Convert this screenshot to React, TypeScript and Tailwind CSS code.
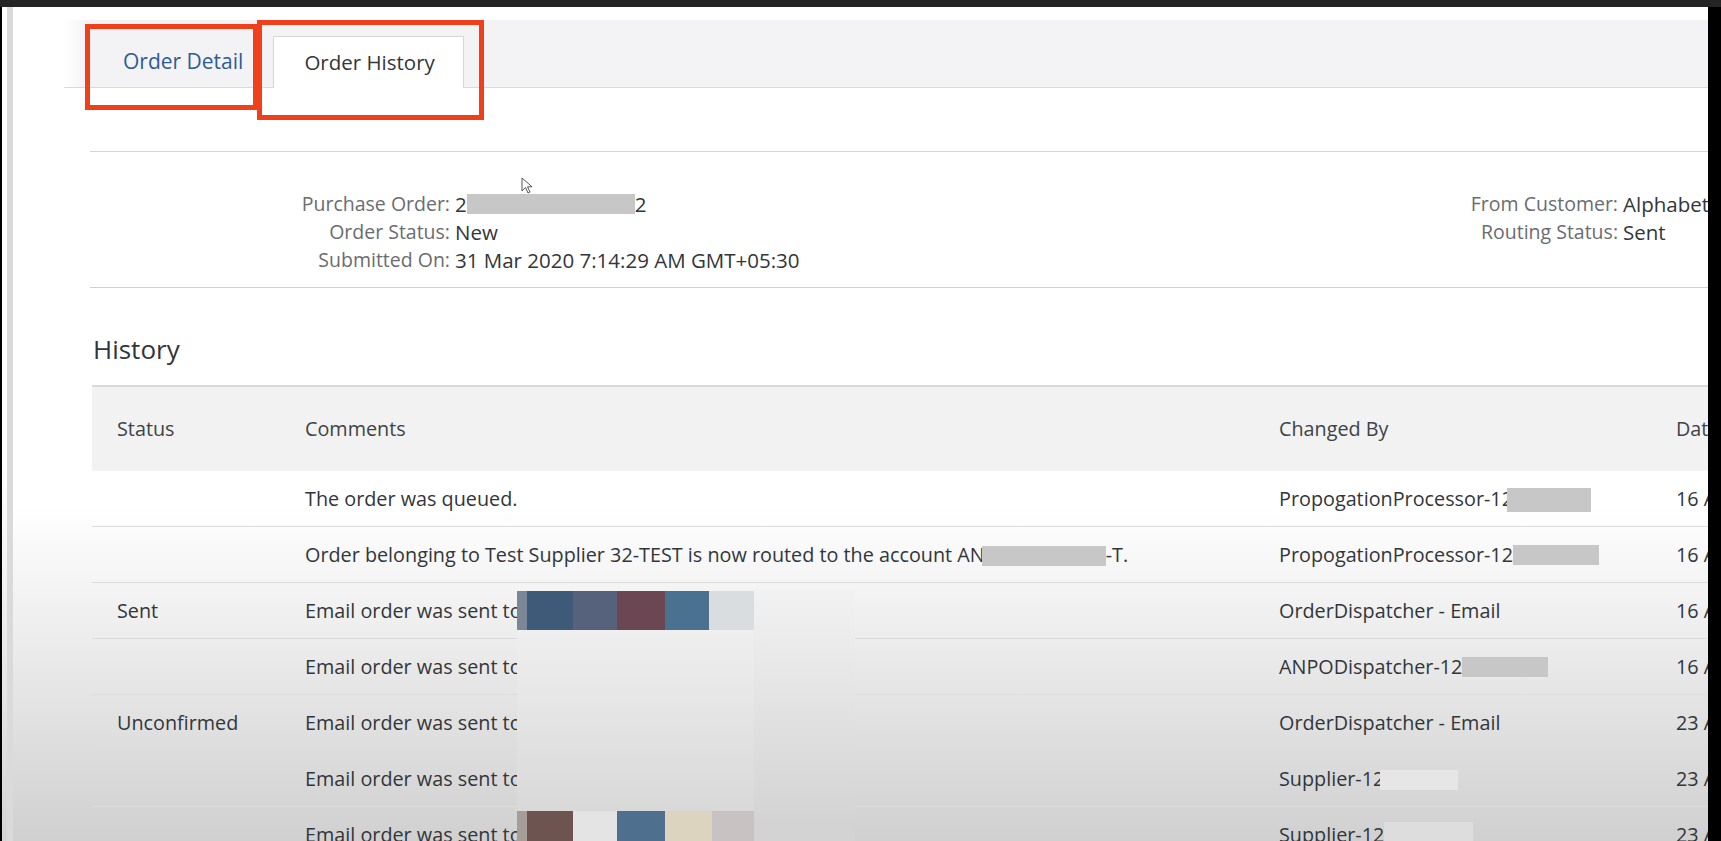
import React from "react";

interface HistoryRow {
  status: string;
  comment: React.ReactNode;
  changedBy: React.ReactNode;
  date: string;
}

// grey redaction block used inline with text
function Redact({ w, h = 22, tone = "bg-[#c7c7c7]" }: { w: number; h?: number; tone?: string }) {
  return (
    <span
      className={`inline-block align-middle ${tone}`}
      style={{ width: w, height: h }}
    />
  );
}

const rows: HistoryRow[] = [
  {
    status: "",
    comment: "The order was queued.",
    changedBy: (
      <>
        PropogationProcessor-12
        <span className="-ml-[6px]">
          <Redact w={84} h={24} />
        </span>
      </>
    ),
    date: "16 Apr 2020 10:41:12 AM",
  },
  {
    status: "",
    comment: (
      <>
        Order belonging to Test Supplier 32-TEST is now routed to the account AN
        <span className="-ml-[3px]">
          <Redact w={124} h={20} />
        </span>
        -T.
      </>
    ),
    changedBy: (
      <>
        PropogationProcessor-12
        <Redact w={86} h={20} />
      </>
    ),
    date: "16 Apr 2020 10:41:12 AM",
  },
  {
    status: "Sent",
    comment: "Email order was sent to",
    changedBy: "OrderDispatcher - Email",
    date: "16 Apr 2020 10:42:03 AM",
  },
  {
    status: "",
    comment: "Email order was sent to",
    changedBy: (
      <>
        ANPODispatcher-12
        <Redact w={86} h={20} />
      </>
    ),
    date: "16 Apr 2020 10:42:03 AM",
  },
  {
    status: "Unconfirmed",
    comment: "Email order was sent to",
    changedBy: "OrderDispatcher - Email",
    date: "23 Apr 2020 09:15:40 AM",
  },
  {
    status: "",
    comment: "Email order was sent to",
    changedBy: (
      <>
        Supplier-12
        <span className="-ml-[4px]">
          <Redact w={78} h={20} tone="bg-[#e6e6e6]" />
        </span>
      </>
    ),
    date: "23 Apr 2020 09:15:40 AM",
  },
  {
    status: "",
    comment: "Email order was sent to",
    changedBy: (
      <>
        Supplier-12
        <Redact w={89} h={26} tone="bg-[#dddddd]" />
      </>
    ),
    date: "23 Apr 2020 09:15:40 AM",
  },
];

export default function App() {
  return (
    <div className="w-[1721px] h-[841px] overflow-hidden flex flex-col bg-black font-['Open_Sans',sans-serif]">
      {/* top dark strip */}
      <div className="h-[7px] bg-[#242424] shrink-0" />

      <div className="flex flex-1 min-h-0">
        {/* left edge */}
        <div className="w-[2px] bg-black" />
        <div className="w-[5px] bg-[linear-gradient(to_bottom,#ffffff_55%,#d4d4d4)]" />
        <div className="w-[6px] bg-[#dadada]" />

        {/* page */}
        <div className="relative flex-1 min-w-0 overflow-hidden bg-[linear-gradient(to_bottom,#ffffff_0%,#ffffff_60%,#d0d0d0_100%)]">
          {/* Tabs */}
          <div className="mt-[13px] ml-[51px] h-[68px] flex items-end border-b border-[#d9d9db] bg-[linear-gradient(to_right,#ffffff,#f3f3f5_24px)]">
            <div className="h-[51px] flex items-center pl-[59px] pr-[30px] text-[21px] text-[#2f5b98]">
              Order Detail
            </div>
            <div className="h-[52px] -mb-px flex items-center pl-[30px] pr-[28px] bg-white border border-b-0 border-[#d6d6d8] text-[20.5px] text-[#32363a]">
              Order History
            </div>
          </div>

          {/* highlight boxes */}
          <div className="absolute left-[72px] top-[17px] w-[173px] h-[86px] border-[5px] border-[#ef3f1b]" />
          <div className="absolute left-[244px] top-[13px] w-[227px] h-[100px] border-[5px] border-[#ef3f1b]" />

          {/* mouse pointer */}
          <svg
            className="absolute left-[508px] top-[170px]"
            width="14"
            height="18"
            viewBox="0 0 14 18"
          >
            <path
              d="M1 1 L1 14 L4.5 10.5 L7 16 L9 15 L6.5 9.8 L11 9.8 Z"
              fill="#ffffff"
              stroke="#555"
              strokeWidth="1"
              strokeLinejoin="round"
            />
          </svg>

          <div className="ml-[77px]">
            {/* info */}
            <div className="mt-[63px] border-t border-[#d4d4d4]" />
            <div className="flex pt-[38px] pb-[13px] leading-[28px] whitespace-nowrap">
              <div className="w-[1360px] shrink-0 grid grid-cols-[360px_1fr] gap-x-[5px]">
                <span className="text-right text-[19.5px] text-[#6a6d70]">Purchase Order:</span>
                <span className="text-[20.5px] text-[#32363a] flex items-center">
                  2
                  <Redact w={168} h={20} />
                  2
                </span>
                <span className="text-right text-[19.5px] text-[#6a6d70]">Order Status:</span>
                <span className="text-[20.5px] text-[#32363a]">New</span>
                <span className="text-right text-[19.5px] text-[#6a6d70]">Submitted On:</span>
                <span className="text-[20.5px] text-[#32363a]">31 Mar 2020 7:14:29 AM GMT+05:30</span>
              </div>
              <div className="shrink-0 grid grid-cols-[168px_1fr] gap-x-[5px] content-start">
                <span className="text-right text-[19.5px] text-[#6a6d70]">From Customer:</span>
                <span className="text-[20.5px] text-[#32363a]">Alphabet Inc.</span>
                <span className="text-right text-[19.5px] text-[#6a6d70]">Routing Status:</span>
                <span className="text-[20.5px] text-[#32363a]">Sent</span>
              </div>
            </div>
            <div className="border-t border-[#d0d0d0]" />

            {/* History */}
            <h2 className="mt-[45px] mb-[20px] ml-[3px] text-[26px] leading-[32px] text-[#32363a]">
              History
            </h2>

            <div className="relative ml-[2px] w-[1760px] text-[19.8px] text-[#32363a] whitespace-nowrap">
              <div className="grid grid-cols-[188px_974px_397px_1fr] h-[86px] items-center bg-[#f2f2f2] border-t-2 border-[#dadada] text-[#404346]">
                <span className="pl-[25px]">Status</span>
                <span className="pl-[25px]">Comments</span>
                <span className="pl-[25px]">Changed By</span>
                <span className="pl-[25px]">Date</span>
              </div>
              {rows.map((row, i) => (
                <div
                  key={i}
                  className="grid grid-cols-[188px_974px_397px_1fr] h-[56px] items-center border-b border-[#dcdcdc]"
                >
                  <span className="pl-[25px]">{row.status}</span>
                  <span className="pl-[25px] flex items-center">{row.comment}</span>
                  <span className="pl-[25px] flex items-center">{row.changedBy}</span>
                  <span className="pl-[25px]">{row.date}</span>
                </div>
              ))}

              {/* pixelated email redaction */}
              <div className="absolute left-[425px] top-[204px] w-[338px] h-[260px] flex">
                <div className="w-[237px] flex flex-col bg-[linear-gradient(to_bottom,#f4f4f4,#d7d7d7_90%)]">
                  <div className="flex h-[41px] mt-[2px]">
                    <div className="w-[10px] bg-[#7b8797]" />
                    <div className="w-[46px] bg-[#3f5a78]" />
                    <div className="w-[44px] bg-[#56617c]" />
                    <div className="w-[48px] bg-[#6b4753]" />
                    <div className="w-[44px] bg-[#4b7191]" />
                    <div className="w-[45px] bg-[#d9dde0]" />
                  </div>
                  <div className="flex h-[40px] mt-[181px]">
                    <div className="w-[10px] bg-[#a59d97]" />
                    <div className="w-[46px] bg-[#6e5450]" />
                    <div className="w-[44px] bg-[#e4e4e4]" />
                    <div className="w-[48px] bg-[#4e6f8d]" />
                    <div className="w-[47px] bg-[#dcd4bf]" />
                    <div className="w-[42px] bg-[#c9c2c2]" />
                  </div>
                </div>
                <div className="flex-1 bg-[linear-gradient(to_bottom,#f2f2f2,#d3d3d3_90%)]" />
              </div>
            </div>
          </div>
        </div>

        {/* right edge */}
        <div className="w-[13px] bg-black" />
      </div>
    </div>
  );
}
